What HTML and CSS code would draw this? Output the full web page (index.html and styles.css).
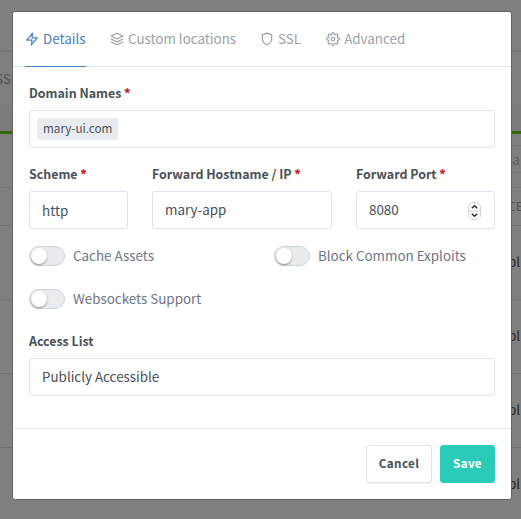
FILE: index.html
```html
<!DOCTYPE html>
<html lang="en">
<head>
<meta charset="utf-8">
<title>Proxy Host</title>
<link rel="stylesheet" href="styles.css">
</head>
<body>
<main class="page">
  <div class="page-head"></div>
  <div class="page-nav"><span class="nav-text">SSL</span></div>
  <div class="page-gap"></div>
  <div class="card-status"></div>
  <div class="card-tools"><div class="search">ea</div></div>
  <div class="table-head"><span>CE</span></div>
  <div class="table-row"><span>bl</span></div>
  <div class="table-row"><span>bl</span></div>
  <div class="table-row"><span>bl</span></div>
  <div class="table-row last"><span>bl</span></div>
</main>
<section class="modal">
  <nav class="tabs">
    <a class="tab active"><svg class="icon" viewBox="0 0 24 24"><path d="M13 2 3 14h9l-1 8 10-12h-9z"/></svg><span>Details</span></a>
    <a class="tab locations"><svg class="icon" viewBox="0 0 24 24"><path d="M12 2 2 7l10 5 10-5zM2 17l10 5 10-5M2 12l10 5 10-5"/></svg><span>Custom locations</span></a>
    <a class="tab ssl"><svg class="icon" viewBox="0 0 24 24"><path d="M12 22s8-4 8-10V5l-8-3-8 3v7c0 6 8 10 8 10z"/></svg><span>SSL</span></a>
    <a class="tab advanced"><svg class="icon" viewBox="0 0 24 24"><circle cx="12" cy="12" r="3"/><path d="M19.4 15a1.65 1.65 0 0 0 .33 1.82l.06.06a2 2 0 1 1-2.83 2.83l-.06-.06a1.65 1.65 0 0 0-2.8 1.17V21a2 2 0 0 1-4 0v-.09A1.65 1.65 0 0 0 9 19.4a1.65 1.65 0 0 0-1.82.33l-.06.06a2 2 0 1 1-2.83-2.83l.06-.06a1.65 1.65 0 0 0-1.17-2.8H3a2 2 0 0 1 0-4h.09A1.65 1.65 0 0 0 4.6 9a1.65 1.65 0 0 0-.33-1.82l-.06-.06a2 2 0 1 1 2.83-2.83l.06.06A1.65 1.65 0 0 0 10 3.09V3a2 2 0 0 1 4 0v.09a1.65 1.65 0 0 0 2.9 1.26l.06-.06a2 2 0 1 1 2.83 2.83l-.06.06A1.65 1.65 0 0 0 20.91 10H21a2 2 0 0 1 0 4h-.09a1.65 1.65 0 0 0-1.51 1z"/></svg><span>Advanced</span></a>
  </nav>
  <div class="body">
    <div class="field domains">
      <label class="label">Domain Names <b class="req">*</b></label>
      <div class="control tags"><span class="tag">mary-ui.com</span></div>
    </div>
    <div class="row">
      <div class="field scheme"><label class="label">Scheme <b class="req">*</b></label><div class="control http">http</div></div>
      <div class="field host"><label class="label">Forward Hostname / IP <b class="req">*</b></label><div class="control">mary-app</div></div>
      <div class="field port"><label class="label">Forward Port <b class="req">*</b></label>
        <div class="control number"><span>8080</span><svg class="spinner" viewBox="0 0 13 18"><rect x=".5" y=".5" width="12" height="17" rx="4.5"/><path class="divider" d="M1 9h11"/><path class="arrow" d="m3.8 6.3 2.7-2.6 2.7 2.6M3.8 11.7l2.7 2.6 2.7-2.6"/></svg></div></div>
    </div>
    <div class="switches">
      <div class="option"><i class="switch"></i><span>Cache Assets</span></div>
      <div class="option"><i class="switch"></i><span>Block Common Exploits</span></div>
      <div class="option"><i class="switch"></i><span>Websockets Support</span></div>
    </div>
    <div class="field access"><label class="label">Access List</label><div class="control">Publicly Accessible</div></div>
  </div>
  <footer class="footer"><button class="btn cancel">Cancel</button><button class="btn save">Save</button></footer>
</section>
</body>
</html>
```
FILE: styles.css
```css
* { box-sizing: border-box; }
body {
  margin: 0;
  width: 521px;
  height: 519px;
  overflow: hidden;
  position: relative;
  background: #7f7f7f;
  color: #495057;
  font: 13.4px/20px "Noto Sans CJK SC", "Noto Sans", sans-serif;
}
.page { color: #24282b; }
.page-head { height: 52px; border-bottom: 2px solid #777879; }
.page-nav { height: 53px; padding-top: 16px; color: #4d5259; }
.nav-text { display: block; margin-left: -5px; }
.page-gap { height: 26px; background: #797b7d; }
.card-status { height: 3px; background: #376700; }
.card-tools { height: 54px; padding-top: 11px; border-bottom: 1px solid #747576; }
.search { height: 28px; margin: 0 -10px 0 400px; padding: 3px 0 0 104px; border: 1px solid #70737a; color: #5c6064; white-space: nowrap; }
.table-head { height: 38px; padding: 8px 0 0 508px; border-bottom: 1px solid #6f7072; color: #4d5259; font-size: 12px; }
.table-row { height: 74px; padding: 25px 0 0 508px; border-bottom: 1px solid #6f7072; }
.table-row.last { border: 0; }
.modal {
  position: absolute;
  left: 12px;
  top: 11px;
  width: 500px;
  height: 489px;
  border: 1px solid #656565;
  border-radius: 3px;
  background: #fff;
}
.tabs { display: flex; height: 55px; padding-left: 12px; border-bottom: 1px solid #dee2eb; color: #9aa0ac; }
.tab { display: flex; align-items: center; height: 55px; padding-bottom: 1px; white-space: nowrap; }
.tab span { padding-bottom: 2px; }
.tab.active { width: 61px; padding-bottom: 0; color: #467fcf; border-bottom: 1px solid #467fcf; }
.tab.locations { margin-left: 24px; }
.tab.ssl { margin-left: 24px; }
.tab.advanced { margin-left: 25px; }
.icon { width: 14px; height: 14px; margin-right: 4px; fill: none; stroke: currentColor; stroke-width: 2; stroke-linecap: round; stroke-linejoin: round; }
.body { height: 362px; padding: 16px; border-bottom: 1px solid #e9ecef; }
.label { display: block; height: 27px; font-size: 12.4px; font-weight: 700; line-height: 21px; white-space: nowrap; }
.req { color: #cd201f; }
.control { height: 38px; padding: 7px 12px; border: 1px solid #dee2eb; border-radius: 3px; }
.control.tags { padding: 7px; }
.tag { display: inline-block; height: 22px; padding: 0 6px; border-radius: 3px; background: #e9ecef; font-size: 11.7px; line-height: 19px; vertical-align: top; }
.row { display: grid; grid-template-columns: 99px 180px 139px; column-gap: 24px; margin-top: 16px; }
.control.http { padding-top: 8px; }
.number { display: flex; justify-content: space-between; }
.spinner { width: 13px; height: 18px; margin: 3px 1px 0 0; fill: #fff; stroke: #d2d2d2; }
.arrow { fill: none; stroke: #303030; stroke-width: 1.5; }
.switches { display: grid; grid-template-columns: 245px 1fr; row-gap: 21px; margin-top: 16px; color: #6e7687; }
.option { display: flex; align-items: center; height: 22px; white-space: nowrap; }
.option span { padding-bottom: 2px; }
.switch { width: 36px; height: 20px; margin-right: 8px; border: 1px solid #ced4de; border-radius: 10px; background: #e9ecef; }
.switch::before { content: ""; display: block; width: 16px; height: 16px; margin: 1px; border-radius: 50%; background: #fff; box-shadow: 0 1px 2px rgba(0, 0, 0, .4); }
.access { margin-top: 21px; }
.footer { display: flex; justify-content: flex-end; gap: 8px; padding: 16px; }
.btn { height: 38px; padding: 0 0 2px; border: 1px solid #dee2eb; border-radius: 3px; background: #fff; color: #495057; font: 700 11.7px/20px "Noto Sans CJK SC", sans-serif; letter-spacing: .35px; }
.cancel { width: 66px; box-shadow: 0 1px 1px rgba(0, 0, 0, .05); }
.save { width: 55px; border-color: #2bcbba; background: #2bcbba; color: #fff; }
```
